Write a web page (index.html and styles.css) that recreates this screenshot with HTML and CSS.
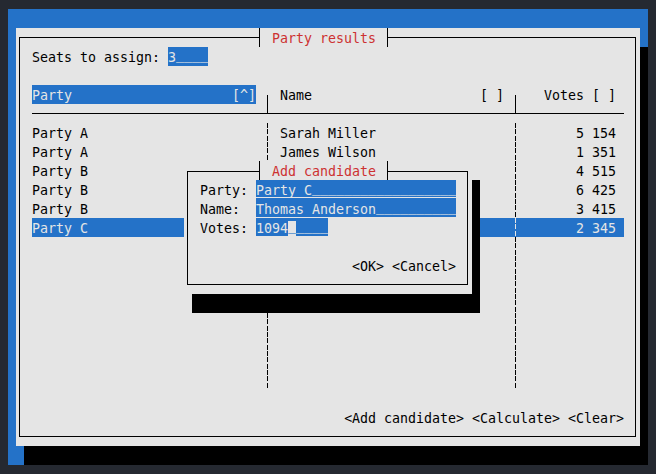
FILE: index.html
```html
<html>

<head>
<meta charset="utf-8">
<link rel="stylesheet" href="styles.css">
</head>

<body>

<div class="term">
<div class="window">
<div class="frame">
	<div class="title">Party results</div>

	<div class="row">Seats to assign: <span class="field">3<span class="pad">____</span></span></div>
	<div class="row"></div>

	<div class="grid head">
		<div class="party"><span>Party</span><span>[^]</span></div>
		<div class="sep"></div>
		<div class="name"><span>Name</span><span>[ ]</span></div>
		<div class="sep"></div>
		<div class="votes">Votes [ ]</div>
	</div>
	<div class="rule"></div>

	<div class="grid"><div>Party A</div><div class="sep dash"></div><div>Sarah Miller</div><div class="sep dash"></div><div class="votes">5 154</div></div>
	<div class="grid"><div>Party A</div><div class="sep dash"></div><div>James Wilson</div><div class="sep dash"></div><div class="votes">1 351</div></div>
	<div class="grid"><div>Party B</div><div class="sep dash"></div><div></div><div class="sep dash"></div><div class="votes">4 515</div></div>
	<div class="grid"><div>Party B</div><div class="sep dash"></div><div></div><div class="sep dash"></div><div class="votes">6 425</div></div>
	<div class="grid"><div>Party B</div><div class="sep dash"></div><div></div><div class="sep dash"></div><div class="votes">3 415</div></div>
	<div class="grid selected"><div>Party C</div><div class="sep dash"></div><div></div><div class="sep dash"></div><div class="votes">2 345</div></div>
	<div class="grid"><div></div><div class="sep dash"></div><div></div><div class="sep dash"></div><div></div></div>
	<div class="grid"><div></div><div class="sep dash"></div><div></div><div class="sep dash"></div><div></div></div>
	<div class="grid"><div></div><div class="sep dash"></div><div></div><div class="sep dash"></div><div></div></div>
	<div class="grid"><div></div><div class="sep dash"></div><div></div><div class="sep dash"></div><div></div></div>
	<div class="grid"><div></div><div class="sep dash"></div><div></div><div class="sep dash"></div><div></div></div>
	<div class="grid"><div></div><div class="sep dash"></div><div></div><div class="sep dash"></div><div></div></div>
	<div class="grid"><div></div><div class="sep dash"></div><div></div><div class="sep dash"></div><div></div></div>
	<div class="grid"><div></div><div class="sep dash"></div><div></div><div class="sep dash"></div><div></div></div>

	<div class="row"></div>
	<div class="row actions">&lt;Add candidate&gt; &lt;Calculate&gt; &lt;Clear&gt;</div>
</div>

<div class="dialog">
<div class="dframe">
	<div class="dtitle">Add candidate</div>
	<div class="entry"><span class="label">Party:</span><span class="input wide under">Party C<span class="pad">__________________</span></span></div>
	<div class="entry"><span class="label">Name:</span><span class="input wide short">Thomas Anderson<span class="pad">__________</span></span></div>
	<div class="entry"><span class="label">Votes:</span><span class="input short">1094<span class="cursor"><span class="pad">_</span></span><span class="pad">____</span></span></div>
	<div class="row"></div>
	<div class="row actions">&lt;OK&gt; &lt;Cancel&gt;</div>
</div>
</div>

</div>
</div>

</body>

</html>
```

FILE: styles.css
```css
html
{
	background-color: #252931;
}

body
{
	margin: 0;
	padding: 9px 8px;
	font-family: "DejaVu Sans Mono", monospace;
	font-size: 13.29px;
	line-height: 21px;
	color: #000000;
}

.term
{
	box-sizing: border-box;
	width: 640px;
	height: 456px;
	padding: 19px 0 0 8px;
	background-color: #2472c8;
}

.window
{
	position: relative;
	box-sizing: border-box;
	width: 624px;
	height: 418px;
	padding: 9px 4px 9px 3px;
	background-color: #e5e5e5;
	box-shadow: 8px 19px 0 #000000;
}

.frame
{
	position: relative;
	border: 1px solid #000000;
	padding: 9px 11px 9px 12px;
}

.title
{
	position: absolute;
	top: -10px;
	left: 239px;
	height: 19px;
	padding: 0 11px 0 12px;
	border-left: 1px solid #000000;
	border-right: 1px solid #000000;
	background-color: #e5e5e5;
	color: #cd3131;
	white-space: pre;
}

.row
{
	height: 19px;
	white-space: pre;
}

.field
{
	display: inline-block;
	height: 19px;
	background-color: #2472c8;
	color: #e5e5e5;
}

/* underscores sit a little higher in the terminal font */
.pad
{
	position: relative;
	top: -3px;
}

.grid
{
	display: grid;
	grid-template-columns: 224px 24px 224px 24px 96px;
	grid-template-rows: 19px;
	height: 19px;
	white-space: pre;
}

.votes
{
	text-align: right;
	padding-right: 8px;
}

.head .party
{
	display: flex;
	justify-content: space-between;
	background-color: #2472c8;
	color: #e5e5e5;
}

.head .name
{
	display: flex;
	justify-content: space-between;
}

.head .sep
{
	background: linear-gradient(#000000, #000000) 11px 10px / 1px 9px no-repeat;
}

.rule
{
	height: 19px;
	background:
		linear-gradient(#000000, #000000) 0 9px / 100% 1px no-repeat,
		linear-gradient(#000000, #000000) 235px 0 / 1px 9px no-repeat,
		linear-gradient(#000000, #000000) 483px 0 / 1px 9px no-repeat;
}

.dash
{
	background: repeating-linear-gradient(#000000 0 5px, transparent 5px 6.333px) 11px 0 / 1px 100% no-repeat;
}

.selected
{
	background-color: #2472c8;
	color: #e5e5e5;
}

.selected .dash
{
	background: repeating-linear-gradient(#e5e5e5 0 5px, transparent 5px 6.333px) 11px 0 / 1px 100% no-repeat;
}

.actions
{
	text-align: right;
}

.dialog
{
	position: absolute;
	left: 168px;
	top: 133px;
	box-sizing: border-box;
	width: 288px;
	height: 133px;
	padding: 10px 4px 9px 3px;
	background-color: #e5e5e5;
	box-shadow: 8px 19px 0 #000000;
}

.dframe
{
	position: relative;
	border: 1px solid #000000;
	padding: 8px 11px 9px 12px;
}

.dtitle
{
	position: absolute;
	top: -11px;
	left: 71px;
	height: 19px;
	padding: 0 11px 0 12px;
	border-left: 1px solid #000000;
	border-right: 1px solid #000000;
	background-color: #e5e5e5;
	color: #cd3131;
	white-space: pre;
}

.entry
{
	display: flex;
	height: 19px;
	white-space: pre;
}

.label
{
	width: 56px;
}

.input
{
	width: 72px;
	height: 19px;
	background-color: #2472c8;
	color: #e5e5e5;
}

.input.wide
{
	width: 200px;
}

.input.short
{
	height: 18px;
}

.input.under
{
	background:
		linear-gradient(#e5e5e5, #e5e5e5) 0 17px / 100% 1px no-repeat,
		#2472c8;
}

.cursor
{
	background-color: #e5e5e5;
	color: #2472c8;
}
```
